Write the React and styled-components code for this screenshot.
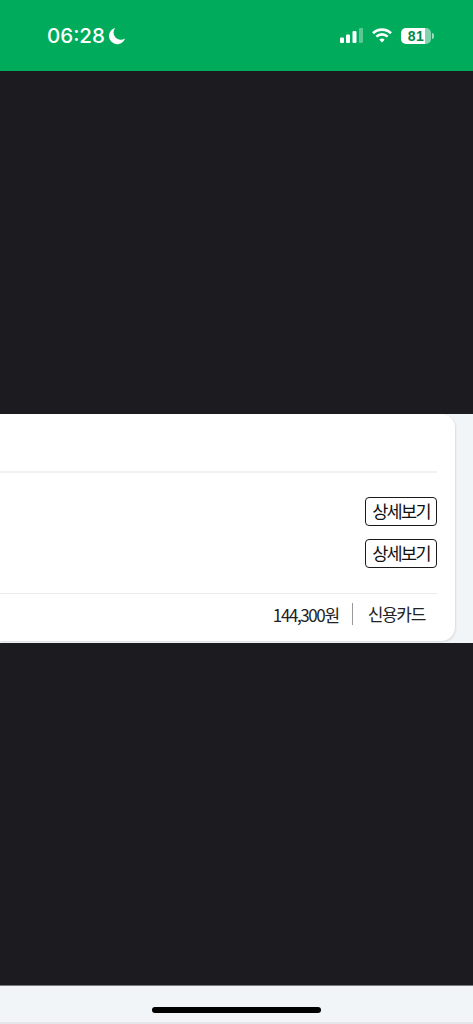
import React from "react";
import styled, { createGlobalStyle } from "styled-components";

const GlobalStyle = createGlobalStyle`
  html, body {
    margin: 0;
    padding: 0;
    background: #1c1c20;
  }
`;

const Page = styled.div`
  width: 473px;
  height: 1024px;
  display: flex;
  flex-direction: column;
  overflow: hidden;
  font-family: "Noto Sans CJK KR", "Liberation Sans", sans-serif;
`;

const StatusBar = styled.div`
  height: 71px;
  flex-shrink: 0;
  background: #00ab5c;
  display: flex;
  align-items: center;
  justify-content: space-between;
  padding: 0 42px 0 47px;
  color: #fff;
`;

const TimeGroup = styled.div`
  display: flex;
  align-items: center;
  gap: 3px;
`;

const Time = styled.span`
  font-family: Inter, "Liberation Sans", sans-serif;
  font-size: 20.5px;
  font-weight: 450;
  line-height: 1;
  padding-top: 1px;
`;

const StatusIcons = styled.div`
  display: flex;
  align-items: center;
  gap: 9px;
`;

const Battery = styled.div`
  position: relative;
  width: 30px;
  height: 16px;
  border-radius: 5px;
  background: linear-gradient(90deg, #fff 0 81%, rgba(255, 255, 255, 0.5) 81% 100%);
  display: flex;
  align-items: center;
  justify-content: center;
  color: #00894a;
  font-family: "Liberation Sans", sans-serif;
  font-size: 14px;
  font-weight: 700;
  letter-spacing: 0.5px;

  &::after {
    content: "";
    position: absolute;
    right: -3px;
    top: 5px;
    width: 2px;
    height: 6px;
    border-radius: 0 2px 2px 0;
    background: rgba(255, 255, 255, 0.6);
  }
`;

const Dim = styled.div`
  height: ${(props) => props.$height}px;
  flex-shrink: 0;
  background: #1c1c20;
`;

const Band = styled.div`
  height: 229px;
  flex-shrink: 0;
  background: #f2f5f8;
  padding-right: 18px;
`;

const Card = styled.div`
  height: 227px;
  box-sizing: border-box;
  background: #fff;
  border-radius: 0 14px 14px 0;
  box-shadow: 1px 1px 2px rgba(0, 0, 0, 0.1);
  padding-right: 18px;
  display: flex;
  flex-direction: column;
`;

const CardHead = styled.div`
  height: 57px;
  flex-shrink: 0;
  border-bottom: 2px solid #f0f1f2;
`;

const Actions = styled.div`
  height: 121px;
  flex-shrink: 0;
  box-sizing: border-box;
  border-bottom: 1px solid #e9eaec;
  display: flex;
  flex-direction: column;
  align-items: flex-end;
  gap: 13px;
  padding-top: 24px;
`;

const DetailButton = styled.button`
  width: 72px;
  height: 29px;
  box-sizing: border-box;
  padding: 0 0 2px;
  background: #fff;
  border: 1.5px solid #1a1a1a;
  border-radius: 4px;
  color: #111;
  font-family: inherit;
  font-size: 17.5px;
  font-weight: 400;
  letter-spacing: -1.7px;
  line-height: 1;
`;

const Summary = styled.div`
  flex: 1;
  display: flex;
  align-items: center;
  justify-content: flex-end;
  padding-right: 12px;
  padding-bottom: 7px;
  color: #222;
  font-size: 17px;
  letter-spacing: -1.4px;
`;

const Payment = styled.span`
  margin-left: 13px;
  padding-left: 15px;
  border-left: 1px solid #999;
  line-height: 22px;
  letter-spacing: -1.3px;
`;

const BottomBar = styled.div`
  flex: 1;
  background: #f2f5f7;
  border-top: 1px solid #777b7e;
  border-bottom: 2px solid #e4e6e8;
  display: flex;
  justify-content: center;
  padding-top: 21px;
  box-sizing: border-box;
`;

const HomeIndicator = styled.div`
  width: 169px;
  height: 6px;
  border-radius: 3px;
  background: #000;
`;

const Moon = () => (
  <svg width="18" height="18" viewBox="0 0 18 18">
    <path
      d="M7.2 1A8.2 8.2 0 1 0 17 11.4 7.2 7.2 0 0 1 7.2 1Z"
      fill="#fff"
    />
  </svg>
);

const Signal = () => (
  <svg width="23" height="15" viewBox="0 0 23 15">
    <rect x="0" y="9.5" width="4" height="5.5" rx="1" fill="#fff" />
    <rect x="6" y="6.5" width="4" height="8.5" rx="1" fill="#fff" />
    <rect x="12.5" y="3" width="4" height="12" rx="1" fill="#fff" />
    <rect x="19" y="0" width="4" height="15" rx="1" fill="#fff" fillOpacity="0.35" />
  </svg>
);

const Wifi = () => (
  <svg width="20" height="15" viewBox="0 0 20 15" fill="none" stroke="#fff" strokeWidth="2.6">
    <path d="M1 5.2a13 13 0 0 1 18 0" />
    <path d="M4.3 8.6a8.3 8.3 0 0 1 11.4 0" />
    <path d="M10 14.6 7.4 11.8a3.7 3.7 0 0 1 5.2 0Z" fill="#fff" stroke="none" />
  </svg>
);

export default function App() {
  return (
    <Page>
      <GlobalStyle />
      <StatusBar>
        <TimeGroup>
          <Time>06:28</Time>
          <Moon />
        </TimeGroup>
        <StatusIcons>
          <Signal />
          <Wifi />
          <Battery>81</Battery>
        </StatusIcons>
      </StatusBar>
      <Dim $height={343} />
      <Band>
        <Card>
          <CardHead />
          <Actions>
            <DetailButton>상세보기</DetailButton>
            <DetailButton>상세보기</DetailButton>
          </Actions>
          <Summary>
            144,300원
            <Payment>신용카드</Payment>
          </Summary>
        </Card>
      </Band>
      <Dim $height={342} />
      <BottomBar>
        <HomeIndicator />
      </BottomBar>
    </Page>
  );
}
